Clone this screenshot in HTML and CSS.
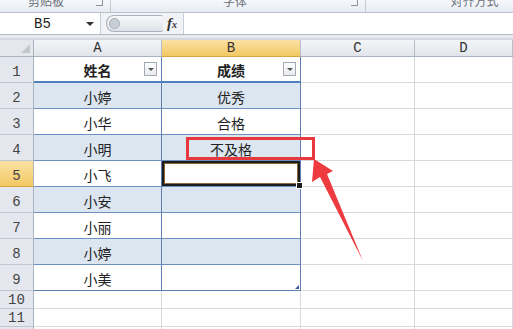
FILE: index.html
```html
<!DOCTYPE html>
<html lang="zh-CN">
<head>
    <meta charset="UTF-8" />
    <title>成绩表</title>
    <link rel="stylesheet" href="styles.css">
</head>
<body>
    <div class="ribbon">
        <div class="group g1"><span class="label">剪贴板</span><span class="launcher"></span></div>
        <div class="group g2"><span class="label">字体</span><span class="launcher"></span></div>
        <div class="group g3"><span class="label">对齐方式</span></div>
    </div>

    <div class="formula-bar">
        <div class="name-box"><span>B5</span><span class="caret"></span></div>
        <div class="tools">
            <span class="pill"><span class="knob"></span></span>
            <span class="fx"><i>f</i><small>x</small></span>
        </div>
        <div class="input"></div>
    </div>

    <div class="sheet">
        <div class="corner"><span class="tri"></span></div>
        <div class="colhead">A</div>
        <div class="colhead active">B</div>
        <div class="colhead">C</div>
        <div class="colhead">D</div>

        <div class="rowhead">1</div>
        <div class="cell t th col-a">姓名<span class="filter"></span></div>
        <div class="cell t th col-b">成绩<span class="filter"></span></div>
        <div class="cell"></div><div class="cell"></div>

        <div class="rowhead">2</div>
        <div class="cell t band col-a">小婷</div>
        <div class="cell t band col-b">优秀</div>
        <div class="cell"></div><div class="cell"></div>

        <div class="rowhead">3</div>
        <div class="cell t col-a">小华</div>
        <div class="cell t col-b">合格</div>
        <div class="cell"></div><div class="cell"></div>

        <div class="rowhead">4</div>
        <div class="cell t band col-a">小明</div>
        <div class="cell t band col-b">不及格</div>
        <div class="cell"></div><div class="cell"></div>

        <div class="rowhead active">5</div>
        <div class="cell t col-a">小飞</div>
        <div class="cell t col-b sel"></div>
        <div class="cell"></div><div class="cell"></div>

        <div class="rowhead">6</div>
        <div class="cell t band col-a">小安</div>
        <div class="cell t band col-b"></div>
        <div class="cell"></div><div class="cell"></div>

        <div class="rowhead">7</div>
        <div class="cell t col-a">小丽</div>
        <div class="cell t col-b"></div>
        <div class="cell"></div><div class="cell"></div>

        <div class="rowhead">8</div>
        <div class="cell t band col-a">小婷</div>
        <div class="cell t band col-b"></div>
        <div class="cell"></div><div class="cell"></div>

        <div class="rowhead">9</div>
        <div class="cell t last col-a">小美</div>
        <div class="cell t last col-b resize"></div>
        <div class="cell"></div><div class="cell"></div>

        <div class="rowhead small">10</div>
        <div class="cell"></div><div class="cell"></div><div class="cell"></div><div class="cell"></div>

        <div class="rowhead small">11</div>
        <div class="cell"></div><div class="cell"></div><div class="cell"></div><div class="cell"></div>

        <div class="rowhead small">12</div>
        <div class="cell"></div><div class="cell"></div><div class="cell"></div><div class="cell"></div>
    </div>

    <!-- annotation drawn over the sheet -->
    <div class="mark"></div>
    <svg class="arrow" width="513" height="329" viewBox="0 0 513 329">
        <polygon points="314,159 333,171 327,174 363,261 320,177 312,182" fill="#ee3b3f" />
    </svg>
</body>
</html>
```

FILE: styles.css
```css
body {
    margin: 0;
    width: 513px;
    height: 329px;
    overflow: hidden;
    position: relative;
    background: #fff;
    font-family: "Noto Sans CJK SC", "Noto Sans", sans-serif;
    color: #222;
}
.ribbon {
    display: flex;
    height: 12px;
    background: linear-gradient(#f6f8fb, #e6ebf2);
    border-bottom: 1px solid #b9c1cc;
    overflow: hidden;
}
.group {
    position: relative;
    display: flex;
    justify-content: center;
    border-right: 1px solid #c5ccd6;
}
.g1 { width: 110px; }
.g2 { width: 254px; }
.g3 { flex: 1; border-right: none; }
.label {
    font-size: 12px;
    line-height: 12px;
    margin-top: -5px;
    color: #6a6f78;
}
.g1 .label { margin-right: 18px; }
.g2 .label { margin-right: 6px; }
.g3 .label { margin-left: 70px; }
.launcher {
    position: absolute;
    right: 7px;
    top: 0;
    width: 6px;
    height: 5px;
    border-right: 1px solid #8c939d;
    border-bottom: 1px solid #8c939d;
}
.formula-bar {
    display: flex;
    height: 21px;
    background: #eef1f5;
    border-bottom: 1px solid #b3bac4;
    margin-bottom: 5px;
    box-shadow: 0 3px 0 #e6eaef, 0 5px 0 #d3d8df;
}
.name-box {
    width: 100px;
    display: flex;
    align-items: center;
    background: #fff;
    border-right: 1px solid #c8ced6;
    font-family: "Liberation Mono", monospace;
    font-size: 14px;
    color: #222;
}
.name-box span:first-child { margin-left: 34px; }
.caret {
    margin-left: auto;
    margin-right: 6px;
    border-left: 4px solid transparent;
    border-right: 4px solid transparent;
    border-top: 4px solid #333;
}
.tools {
    width: 82px;
    display: flex;
    align-items: center;
    background: #f1f3f6;
}
.pill {
    margin-left: 5px;
    width: 56px;
    height: 15px;
    border-radius: 8px 2px 2px 8px;
    background: linear-gradient(#f7f8fa, #dde2e8);
    border: 1px solid #aab2bd;
    border-right: none;
    display: flex;
    align-items: center;
}
.knob {
    margin-left: 2px;
    width: 9px;
    height: 9px;
    border-radius: 50%;
    background: #c9cfd7;
    border: 1px solid #a6aeb8;
}
.fx {
    margin-left: 4px;
    font-family: "Liberation Serif", serif;
    font-style: italic;
    font-weight: bold;
    font-size: 15px;
    color: #333;
}
.fx small { font-size: 10px; }
.input {
    flex: 1;
    background: #fff;
    border-left: 1px solid #c8ced6;
}
.sheet {
    display: grid;
    grid-template-columns: 34px 128px 139px 114px 1fr;
    grid-template-rows: 17px repeat(9, 26px) 18px 18px 18px;
    background: #fff;
}
.sheet > div {
    box-sizing: border-box;
    border-right: 1px solid #d6d9de;
    border-bottom: 1px solid #d6d9de;
}
.corner {
    position: relative;
    background: #e4e8ee;
    border-right: 1px solid #a9b3c0 !important;
    border-bottom: 1px solid #a9b3c0 !important;
}
.tri {
    position: absolute;
    right: 3px;
    bottom: 3px;
    border-left: 9px solid transparent;
    border-bottom: 9px solid #c3c8cf;
}
.colhead {
    display: flex;
    align-items: center;
    justify-content: center;
    background: linear-gradient(#f3f5f8, #e1e5eb);
    border-right: 1px solid #b5bdc8 !important;
    border-bottom: 1px solid #a9b3c0 !important;
    font-family: "Liberation Mono", monospace;
    font-size: 14px;
    color: #333;
}
.colhead.active,
.rowhead.active {
    background: linear-gradient(#fbe2a4, #f3c863);
    border-bottom-color: #d7a53e !important;
}
.rowhead {
    display: flex;
    align-items: flex-end;
    justify-content: center;
    padding-bottom: 2px;
    background: #e4e8ee;
    border-right: 1px solid #a9b3c0 !important;
    border-bottom: 1px solid #c0c7d0 !important;
    font-family: "Liberation Mono", monospace;
    font-size: 14px;
    line-height: 16px;
    color: #444;
}
.rowhead.small { padding-bottom: 0; }
.cell {
    display: flex;
    align-items: center;
    justify-content: center;
    font-size: 14px;
    line-height: 16px;
    padding-top: 2px;
}
.cell.t {
    border-bottom-color: #6c8fc4;
    border-right-color: #5f7fb3;
}
.cell.th {
    position: relative;
    font-weight: bold;
    border-bottom: 2px solid #4f81bd;
}
.cell.band { background: #dce6f1; }
.cell.last { border-bottom-color: #5f7fb3; }
.filter {
    position: absolute;
    right: 4px;
    top: 5px;
    width: 13px;
    height: 14px;
    box-sizing: border-box;
    border: 1px solid #a3a9b1;
    background: linear-gradient(#fdfdfd, #e9ebee);
}
.filter::after {
    content: "";
    position: absolute;
    left: 3px;
    top: 5px;
    border-left: 3px solid transparent;
    border-right: 3px solid transparent;
    border-top: 3px solid #555;
}
.sel {
    position: relative;
    box-shadow: inset 0 0 0 2px #1d1d1d, inset 0 0 0 3px #8a6a3a;
}
.sel::after {
    content: "";
    position: absolute;
    right: -3px;
    bottom: -3px;
    width: 5px;
    height: 5px;
    background: #1d1d1d;
    border: 1px solid #fff;
}
.resize { position: relative; }
.resize::after {
    content: "";
    position: absolute;
    right: 1px;
    bottom: 1px;
    border-left: 4px solid transparent;
    border-bottom: 4px solid #3d5a9c;
}
.mark {
    position: absolute;
    left: 186px;
    top: 137px;
    width: 129px;
    height: 23px;
    box-sizing: border-box;
    border: 3px solid #e8383d;
}
.arrow {
    position: absolute;
    left: 0;
    top: 0;
}
```
